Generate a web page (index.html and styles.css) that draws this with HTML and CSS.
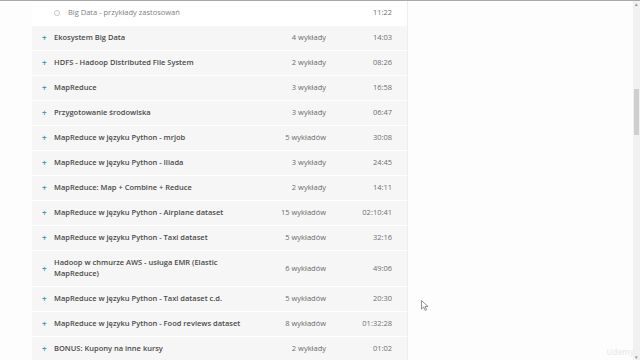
FILE: index.html
```html
<!DOCTYPE html>
<html lang="pl">
<head>
    <meta charset="UTF-8">
    <meta name="viewport" content="width=device-width, initial-scale=1.0">
    <title>Program kursu</title>
    <link rel="stylesheet" href="styles.css">
</head>
<body>

    <div class="page">
        <div class="content">
            <div class="curriculum">
                <div class="lecture">
                    <span class="dot"></span>
                    <span class="lecture-title">Big Data - przykłady zastosowań</span>
                    <span class="time">11:22</span>
                </div>
                <div class="section">
                    <span class="plus">+</span>
                    <span class="title">Ekosystem Big Data</span>
                    <span class="count">4 wykłady</span>
                    <span class="time">14:03</span>
                </div>
                <div class="section">
                    <span class="plus">+</span>
                    <span class="title">HDFS - Hadoop Distributed File System</span>
                    <span class="count">2 wykłady</span>
                    <span class="time">08:26</span>
                </div>
                <div class="section">
                    <span class="plus">+</span>
                    <span class="title">MapReduce</span>
                    <span class="count">3 wykłady</span>
                    <span class="time">16:58</span>
                </div>
                <div class="section">
                    <span class="plus">+</span>
                    <span class="title">Przygotowanie środowiska</span>
                    <span class="count">3 wykłady</span>
                    <span class="time">06:47</span>
                </div>
                <div class="section">
                    <span class="plus">+</span>
                    <span class="title">MapReduce w języku Python - mrjob</span>
                    <span class="count">5 wykładów</span>
                    <span class="time">30:08</span>
                </div>
                <div class="section">
                    <span class="plus">+</span>
                    <span class="title">MapReduce w języku Python - Iliada</span>
                    <span class="count">3 wykłady</span>
                    <span class="time">24:45</span>
                </div>
                <div class="section">
                    <span class="plus">+</span>
                    <span class="title">MapReduce: Map + Combine + Reduce</span>
                    <span class="count">2 wykłady</span>
                    <span class="time">14:11</span>
                </div>
                <div class="section">
                    <span class="plus">+</span>
                    <span class="title">MapReduce w języku Python - Airplane dataset</span>
                    <span class="count">15 wykładów</span>
                    <span class="time">02:10:41</span>
                </div>
                <div class="section">
                    <span class="plus">+</span>
                    <span class="title">MapReduce w języku Python - Taxi dataset</span>
                    <span class="count">5 wykładów</span>
                    <span class="time">32:16</span>
                </div>
                <div class="section">
                    <span class="plus">+</span>
                    <span class="title">Hadoop w chmurze AWS - usługa EMR (Elastic MapReduce)</span>
                    <span class="count">6 wykładów</span>
                    <span class="time">49:06</span>
                </div>
                <div class="section">
                    <span class="plus">+</span>
                    <span class="title">MapReduce w języku Python - Taxi dataset c.d.</span>
                    <span class="count">5 wykładów</span>
                    <span class="time">20:30</span>
                </div>
                <div class="section">
                    <span class="plus">+</span>
                    <span class="title">MapReduce w języku Python - Food reviews dataset</span>
                    <span class="count">8 wykładów</span>
                    <span class="time">01:32:28</span>
                </div>
                <div class="section">
                    <span class="plus">+</span>
                    <span class="title">BONUS: Kupony na inne kursy</span>
                    <span class="count">2 wykłady</span>
                    <span class="time">01:02</span>
                </div>
            </div>
        </div>

        <div class="scrollbar">
            <span class="arrow">&#9652;</span>
            <div class="track">
                <div class="thumb"></div>
            </div>
            <span class="arrow">&#9662;</span>
        </div>
    </div>

    <svg class="cursor" width="8" height="11" viewBox="0 0 8 11">
        <path d="M0.5 0.5 L0.5 9 L2.6 7 L4.2 10.4 L5.6 9.8 L4 6.5 L7 6.5 Z" fill="#fff" stroke="#777" stroke-width="0.8"/>
    </svg>

    <div class="watermark">Udemy</div>

</body>
</html>
```

FILE: styles.css
```css
body {
    margin: 0;
    background: #fdfdfd;
    font-family: "Open Sans", "Liberation Sans", sans-serif;
    font-size: 7.5px;
    color: #555;
    overflow: hidden;
}

.page {
    display: flex;
    height: 360px;
    border-top: 1px solid #a9a9a9;
    box-sizing: border-box;
}

.content {
    flex: 1;
    padding-left: 32px;
}

.curriculum {
    width: 375px;
    display: flex;
    flex-direction: column;
    gap: 1px;
    background: #fff;
    border-right: 1px solid #eee;
}

.lecture,
.section {
    display: grid;
    grid-template-columns: 12px 198px 1fr 66px;
    align-items: center;
    line-height: 11px;
    padding: 6px 15px 7px 10px;
}

.lecture {
    background: #fff;
    grid-template-columns: 14px 1fr 66px;
    padding-left: 22px;
    color: #808080;
}

.section {
    background: #f6f6f6;
}

.dot {
    width: 4px;
    height: 4px;
    border: 1px solid #c8c8c8;
    border-radius: 50%;
}

.plus {
    color: #4a9da6;
    font-weight: 700;
    font-size: 8px;
}

.title {
    font-weight: 600;
    color: #4a4a4a;
}

.count {
    text-align: right;
    color: #6a6a6a;
}

.time {
    text-align: right;
    color: #6f6f6f;
}

/* Scrollbar */
.scrollbar {
    width: 7px;
    background: #f1f1f1;
    display: flex;
    flex-direction: column;
    align-items: center;
}

.arrow {
    font-size: 5px;
    line-height: 6px;
    color: #888;
}

.track {
    flex: 1;
    width: 100%;
    padding-top: 82px;
}

.thumb {
    width: 5px;
    height: 46px;
    margin: 0 auto;
    background: #cfcfcf;
}

.cursor {
    position: absolute;
    left: 421px;
    top: 300px;
}

.watermark {
    position: absolute;
    right: 6px;
    bottom: 3px;
    font-size: 8px;
    font-weight: 600;
    color: #ebebeb;
}
```
